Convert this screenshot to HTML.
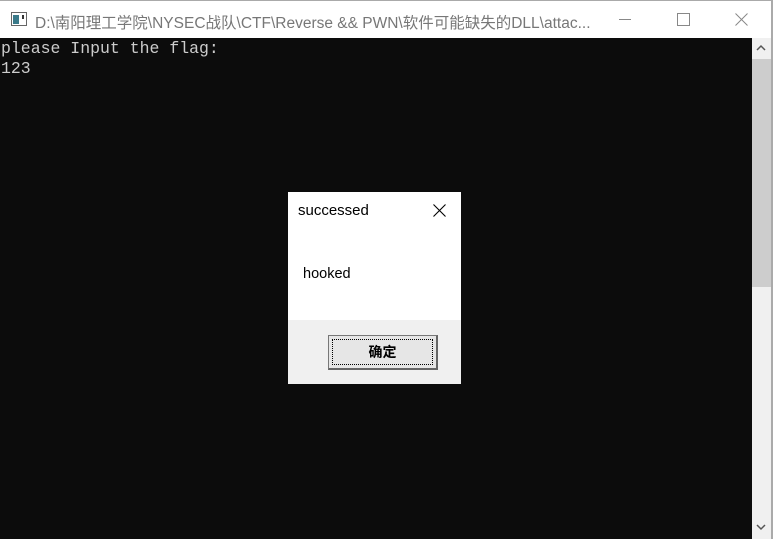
<!DOCTYPE html>
<html><head><style>
body{margin:0;width:773px;height:539px;background:#0c0c0c;position:relative;overflow:hidden;font-family:"Liberation Sans","Noto Sans CJK SC",sans-serif}
.tb{position:absolute;left:0;top:0;width:772px;height:38px;background:#fff;border-top:1px solid #aaa;box-sizing:border-box}
.title{position:absolute;left:35px;top:10px;font-size:15.5px;color:#777;white-space:nowrap}
.con{position:absolute;left:1px;top:39px;font-family:"Liberation Mono",monospace;font-size:16.5px;line-height:20px;color:#ccc;white-space:pre}
.sb{position:absolute;left:752px;top:38px;width:19px;height:501px;background:#f0f0f0}
.th{position:absolute;left:752px;top:59px;width:19px;height:228px;background:#cdcdcd}
.rb{position:absolute;left:771px;top:0;width:2px;height:539px;background:#aaa}
.dlg{position:absolute;left:288px;top:192px;width:173px;height:192px;background:#fff}
.ft{position:absolute;left:0;top:128px;width:173px;height:64px;background:#f0f0f0}
.btn{position:absolute;left:40px;top:143px;width:110px;height:35px;box-sizing:border-box;border:1px solid #777;border-right:2px solid #666;border-bottom:2px solid #666;background:#e6e6e6;font-size:14px;font-weight:bold;text-align:center;line-height:32px;color:#000}
.btn::after{content:"";position:absolute;left:3px;top:3px;right:3px;bottom:3px;border:1px dotted #000}
</style></head><body>
<div class="tb">
<svg style="position:absolute;left:11px;top:11px" width="16" height="14"><rect x="0.5" y="0.5" width="15" height="13" fill="#fff" stroke="#666"/><rect x="2" y="3" width="6" height="9" fill="#3a7a8a"/><rect x="11" y="3" width="2" height="4" fill="#333"/></svg>
<div class="title">D:\南阳理工学院\NYSEC战队\CTF\Reverse &amp;&amp; PWN\软件可能缺失的DLL\attac...</div>
<div style="position:absolute;left:619px;top:18px;width:12px;height:1px;background:#888"></div>
<div style="position:absolute;left:677px;top:12px;width:11px;height:11px;border:1px solid #888"></div>
<svg style="position:absolute;left:735px;top:12px" width="13" height="13"><path d="M0.5 0.5L12.5 12.5M12.5 0.5L0.5 12.5" stroke="#888" stroke-width="1"/></svg>
</div>
<div class="con">please Input the flag:
123</div>
<div class="sb"></div><div class="th"></div>
<svg style="position:absolute;left:756px;top:44px" width="10" height="7"><path d="M1 6L5 2L9 6" stroke="#555" stroke-width="1.5" fill="none"/></svg>
<svg style="position:absolute;left:756px;top:524px" width="10" height="7"><path d="M1 1L5 5L9 1" stroke="#555" stroke-width="1.5" fill="none"/></svg>
<div class="rb"></div>
<div class="dlg">
<div style="position:absolute;left:10px;top:10px;font-size:15px;color:#000">successed</div>
<svg style="position:absolute;left:145px;top:12px" width="13" height="13"><path d="M0.5 0.5L12.5 12.5M12.5 0.5L0.5 12.5" stroke="#000" stroke-width="1.1"/></svg>
<div style="position:absolute;left:15px;top:74px;font-size:14.5px;color:#000">hooked</div>
<div class="ft"><div class="btn" style="top:15px">确定</div></div>
</div>
</body></html>
